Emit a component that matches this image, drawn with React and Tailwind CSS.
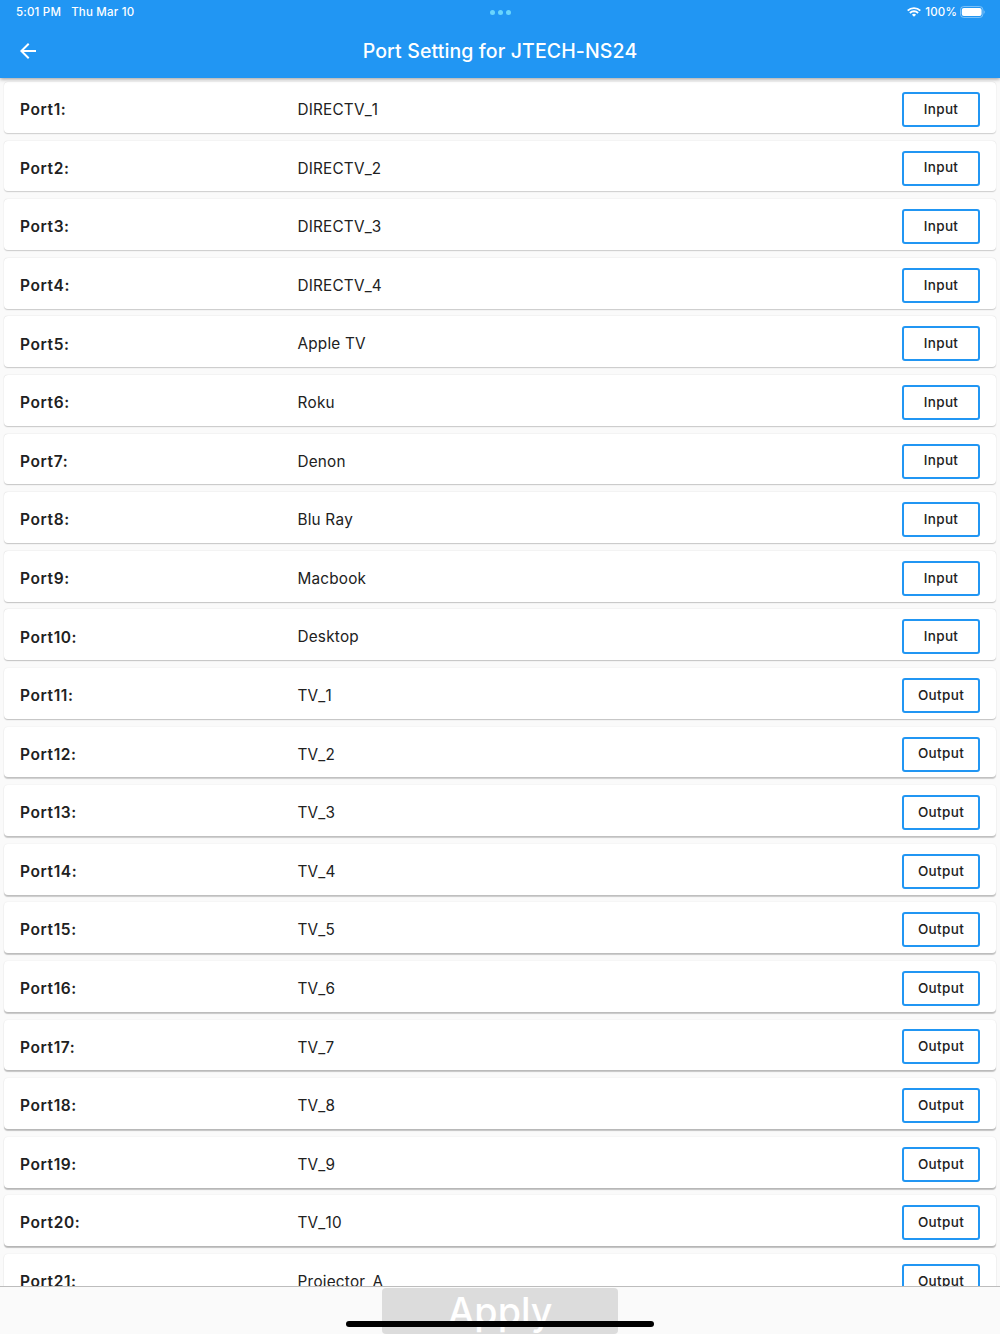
import React from 'react';

const names = [
  'DIRECTV_1', 'DIRECTV_2', 'DIRECTV_3', 'DIRECTV_4', 'Apple TV', 'Roku', 'Denon',
  'Blu Ray', 'Macbook', 'Desktop', 'TV_1', 'TV_2', 'TV_3', 'TV_4', 'TV_5', 'TV_6',
  'TV_7', 'TV_8', 'TV_9', 'TV_10', 'Projector_A',
];

const ports = names.map((name, i) => ({
  label: `Port${i + 1}:`,
  name,
  type: i < 10 ? 'Input' : 'Output',
}));

function StatusBar() {
  return (
    <div className="grid h-6 grid-cols-3 items-center pl-4 pr-[15px] text-[11.5px] font-medium leading-none tracking-[0.2px]">
      <div className="flex gap-[10px] whitespace-nowrap pt-px">
        <span>5:01 PM</span>
        <span>Thu Mar 10</span>
      </div>
      <div className="flex justify-center gap-[3px] pr-px pt-px">
        <i className="size-[5px] rounded-full bg-[#6ad5fd]" />
        <i className="size-[5px] rounded-full bg-[#6ad5fd]" />
        <i className="size-[5px] rounded-full bg-[#6ad5fd]" />
      </div>
      <div className="flex items-center justify-end pt-px">
        <svg width="14" height="10" viewBox="0 0 14 10" fill="none" stroke="white" className="-mt-px mr-1">
          <path d="M.7 3.7a8.9 8.9 0 0 1 12.6 0" strokeWidth="1.9" />
          <path d="M2.9 6a5.8 5.8 0 0 1 8.2 0" strokeWidth="1.9" />
          <path d="M7 9.8 4.9 7.7a3 3 0 0 1 4.2 0Z" fill="white" stroke="none" />
        </svg>
        <span className="mr-[3px]">100%</span>
        <svg width="25" height="12" viewBox="0 0 25 12" className="-mt-px">
          <rect x=".5" y=".5" width="22.4" height="11" rx="3.3" fill="none" stroke="white" strokeOpacity=".4" />
          <rect x="1.8" y="1.9" width="19.8" height="8.2" rx="2" fill="white" />
          <path d="M23.8 4.2c1.1.5 1.1 3.1 0 3.6Z" fill="white" fillOpacity=".5" />
        </svg>
      </div>
    </div>
  );
}

function Header() {
  return (
    <header className="relative z-10 h-[78px] shrink-0 bg-[#2196f3] text-white shadow-[0_1px_4px_rgba(0,0,0,0.4)]">
      <StatusBar />
      <div className="grid h-[54px] grid-cols-[40px_1fr_40px] items-center">
        <svg width="16" height="16" viewBox="4 4 16 16" fill="white" className="ml-[19.6px]">
          <path d="M20 11H7.83l5.59-5.59L12 4l-8 8 8 8 1.41-1.41L7.83 13H20v-2z" />
        </svg>
        <h1 className="text-center text-[19.5px] font-medium leading-6 tracking-[0.12px]">
          Port Setting for JTECH-NS24
        </h1>
      </div>
    </header>
  );
}

function PortRow({ port, index }) {
  const depth = index / 20;
  const boxShadow = `0 ${0.5 + depth}px 1px rgba(0,0,0,${0.1 + depth * 0.12}), 0 0.5px 1.5px rgba(0,0,0,0.09)`;
  return (
    <li
      className="mx-1 mb-[7.8px] grid h-[50.8px] shrink-0 grid-cols-[277.5px_1fr_78px] items-center rounded-[4px] bg-white px-4 pt-[4px] text-[15.3px] text-[#212121]"
      style={{ boxShadow }}
    >
      <span className="pt-[0.6px] text-[15.5px] font-semibold tracking-[0.6px]">{port.label}</span>
      <span className="pt-[2px] tracking-[0.2px] [font-kerning:none]">{port.name}</span>
      <button className="h-[35px] rounded-[3px] border-2 border-[#2196f3] pb-px text-[13.5px] font-[450] tracking-[0.35px]">
        {port.type}
      </button>
    </li>
  );
}

export default function App() {
  return (
    <div className="flex h-[1334px] w-[1000px] flex-col overflow-hidden bg-[#fafafa] font-['Inter',sans-serif]">
      <Header />
      <ul className="flex min-h-0 flex-1 flex-col overflow-hidden pt-[4.1px]">
        {ports.map((port, i) => (
          <PortRow key={port.label} port={port} index={i} />
        ))}
      </ul>
      <footer className="relative flex h-12 shrink-0 justify-center border-t border-[#bdbdbd] bg-[#fafafa]">
        <button className="mt-px h-[45.5px] w-[236px] rounded-[4px] bg-[#dcdcdc] text-[37.7px] font-medium leading-[46px] text-white">
          Apply
        </button>
        <div className="absolute bottom-[7.5px] left-[346px] h-[5.5px] w-[308px] rounded-full bg-black" />
      </footer>
    </div>
  );
}
